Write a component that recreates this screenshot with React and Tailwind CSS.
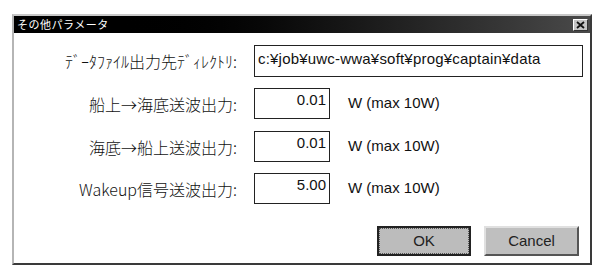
import React from 'react';

const FONT = { fontFamily: '"Liberation Sans", "Noto Sans CJK JP", sans-serif' };
const JP = { fontFamily: '"Noto Sans CJK JP", "Liberation Sans", sans-serif' };

const ROWS = [
  { label: '船上→海底送波出力:', value: '0.01', mt: 'mt-[11px]' },
  { label: '海底→船上送波出力:', value: '0.01', mt: 'mt-[12px]' },
  { label: 'Wakeup信号送波出力:', value: '5.00', mt: 'mt-[11px]' },
];

const CloseIcon = () => (
  <svg width="9" height="8" viewBox="0 0 9 8">
    <path d="M1 1 L8 7 M8 1 L1 7" stroke="#111" strokeWidth="1.8" />
  </svg>
);

const App = () => {
  return (
    <div className="w-[600px] h-[279px] bg-white overflow-hidden pt-[14px] pl-[12px]" style={FONT}>
      <div className="w-[580px] h-[251px] flex flex-col border-2 border-l-[#b5b5b5] border-t-[#c8c8c8] border-r-[#3a3a3a] border-b-[#3a3a3a] bg-white">
        {/* title bar */}
        <div className="h-[17px] flex items-center justify-between bg-gradient-to-r from-black from-[16%] to-[#4a4a4a] pl-[3px] pr-[2px]">
          <span className="text-white text-[11px] leading-none tracking-[0.5px]" style={JP}>その他パラメータ</span>
          <div className="w-[15px] h-[12px] bg-[#c4c4c4] border border-l-white border-t-white border-r-[#333] border-b-[#333] flex items-center justify-center">
            <CloseIcon />
          </div>
        </div>

        <div className="flex flex-col pt-[12px] text-[#111]">
          <div className="flex items-center h-[32px]">
            <div className="w-[223px] text-right text-[16px] font-light" style={JP}>ﾃﾞｰﾀﾌｧｲﾙ出力先ﾃﾞｨﾚｸﾄﾘ:</div>
            <div className="ml-[17px] w-[329px] h-[32px] border border-[#222] flex items-center pl-[3px] pb-[3px] text-[15px] tracking-[0.2px]">
              c:¥job¥uwc-wwa¥soft¥prog¥captain¥data
            </div>
          </div>

          {ROWS.map((row) => (
            <div key={row.label} className={`flex items-center h-[31px] ${row.mt}`}>
              <div className="w-[223px] text-right text-[16px] font-light" style={JP}>{row.label}</div>
              <div className="ml-[17px] w-[76px] h-[31px] border border-[#222] text-right pr-[3px] pt-[2px] text-[15px] leading-[18px]">
                {row.value}
              </div>
              <div className="ml-[18px] text-[15px]">W (max 10W)</div>
            </div>
          ))}

          <div className="flex justify-end gap-[13px] pr-[11px] mt-[22px]">
            <button className="w-[94px] h-[30px] bg-[#bcbcbc] border-2 border-[#222] text-[15px] text-[#222] flex items-center justify-center">
              <span className="w-full h-full border border-dotted border-[#555] flex items-center justify-center">OK</span>
            </button>
            <button className="w-[95px] h-[30px] bg-[#bfbfbf] border-2 border-l-[#e0e0e0] border-t-[#e0e0e0] border-r-[#555] border-b-[#555] text-[15px] text-[#222] flex items-center justify-center">
              Cancel
            </button>
          </div>
        </div>
      </div>
    </div>
  );
};

export default App;
